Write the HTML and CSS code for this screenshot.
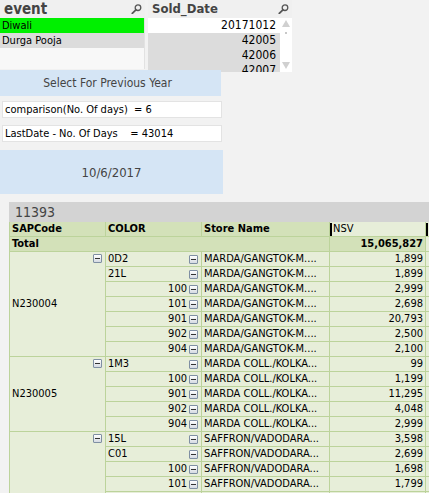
FILE: index.html
```html
<!DOCTYPE html>
<html>
<head>
<meta charset="utf-8">
<link rel="stylesheet" href="styles.css">
</head>
<body>
<div class="top">
  <div class="lb lb-event">
    <div class="lb-head"><span class="lb-title">event</span>
      <svg class="search" width="11" height="10" viewBox="0 0 11 10"><circle cx="7" cy="3.7" r="2.8" fill="none" stroke="#555" stroke-width="1.3"/><line x1="4.9" y1="5.9" x2="1.3" y2="9.3" stroke="#555" stroke-width="1.8" stroke-linecap="round"/></svg>
    </div>
    <div class="lb-body">
      <div class="lb-list">
        <div class="lb-item sel">Diwali</div>
        <div class="lb-item excl">Durga Pooja</div>
      </div>
    </div>
  </div>
  <div class="lb lb-date">
    <div class="lb-head"><span class="lb-title">Sold_Date</span>
      <svg class="search" width="11" height="10" viewBox="0 0 11 10"><circle cx="7" cy="3.7" r="2.8" fill="none" stroke="#555" stroke-width="1.3"/><line x1="4.9" y1="5.9" x2="1.3" y2="9.3" stroke="#555" stroke-width="1.8" stroke-linecap="round"/></svg>
    </div>
    <div class="lb-body">
      <div class="lb-list num">
        <div class="lb-item poss">20171012</div>
        <div class="lb-item excl">42005</div>
        <div class="lb-item excl">42006</div>
        <div class="lb-item excl">42007</div>
      </div>
      <div class="scrollbar">
        <svg width="12" height="54" viewBox="0 0 12 54"><polygon points="6,2 10,9 2,9" fill="#d0d0d0"/><rect x="5" y="14" width="2" height="2" fill="#c8c8c8"/><polygon points="2,44 10,44 6,51" fill="#d0d0d0"/></svg>
      </div>
    </div>
  </div>
</div>

<div class="controls">
  <div class="btn-blue">Select For Previous Year</div>
  <div class="txt">comparison(No. Of days)  = 6</div>
  <div class="txt txt2">LastDate - No. Of Days    = 43014</div>
  <div class="blue-big">10/6/2017</div>
</div>

<div class="pivot">
  <div class="pv-title">11393</div>
  <table class="pv">
    <colgroup><col class="c1"><col class="c2"><col class="c3"><col class="c4"><col class="c5"></colgroup>
    <tr class="hd">
      <td class="first">SAPCode</td>
      <td>COLOR</td>
      <td>Store Name</td>
      <td class="hd-light"><span class="bar"></span>NSV</td>
      <td class="hd-light"><span class="bar"></span></td>
    </tr>
    <tr class="hd">
      <td class="first" colspan="3">Total</td>
      <td class="r">15,065,827</td>
      <td class="lt"></td>
    </tr>

    <tr>
      <td class="first sap" rowspan="7">N230004<span class="mi abs"></span></td>
      <td><div class="cc"><span>0D2</span><span class="mi"></span></div></td>
      <td>MARDA/GANGTOK-M....</td><td class="r">1,899</td><td></td>
    </tr>
    <tr>
      <td><div class="cc"><span>21L</span><span class="mi"></span></div></td>
      <td>MARDA/GANGTOK-M....</td><td class="r">1,899</td><td></td>
    </tr>
    <tr>
      <td><div class="cc n"><span>100</span><span class="mi"></span></div></td>
      <td>MARDA/GANGTOK-M....</td><td class="r">2,999</td><td></td>
    </tr>
    <tr>
      <td><div class="cc n"><span>101</span><span class="mi"></span></div></td>
      <td>MARDA/GANGTOK-M....</td><td class="r">2,698</td><td></td>
    </tr>
    <tr>
      <td><div class="cc n"><span>901</span><span class="mi"></span></div></td>
      <td>MARDA/GANGTOK-M....</td><td class="r">20,793</td><td></td>
    </tr>
    <tr>
      <td><div class="cc n"><span>902</span><span class="mi"></span></div></td>
      <td>MARDA/GANGTOK-M....</td><td class="r">2,500</td><td></td>
    </tr>
    <tr>
      <td><div class="cc n"><span>904</span><span class="mi"></span></div></td>
      <td>MARDA/GANGTOK-M....</td><td class="r">2,100</td><td></td>
    </tr>

    <tr>
      <td class="first sap" rowspan="5">N230005<span class="mi abs"></span></td>
      <td><div class="cc"><span>1M3</span><span class="mi"></span></div></td>
      <td>MARDA COLL./KOLKA...</td><td class="r">99</td><td></td>
    </tr>
    <tr>
      <td><div class="cc n"><span>100</span><span class="mi"></span></div></td>
      <td>MARDA COLL./KOLKA...</td><td class="r">1,199</td><td></td>
    </tr>
    <tr>
      <td><div class="cc n"><span>901</span><span class="mi"></span></div></td>
      <td>MARDA COLL./KOLKA...</td><td class="r">11,295</td><td></td>
    </tr>
    <tr>
      <td><div class="cc n"><span>902</span><span class="mi"></span></div></td>
      <td>MARDA COLL./KOLKA...</td><td class="r">4,048</td><td></td>
    </tr>
    <tr>
      <td><div class="cc n"><span>904</span><span class="mi"></span></div></td>
      <td>MARDA COLL./KOLKA...</td><td class="r">2,999</td><td></td>
    </tr>

    <tr>
      <td class="first sap" rowspan="5"><span class="mi abs"></span></td>
      <td><div class="cc"><span>15L</span><span class="mi"></span></div></td>
      <td>SAFFRON/VADODARA...</td><td class="r">3,598</td><td></td>
    </tr>
    <tr>
      <td><div class="cc"><span>C01</span><span class="mi"></span></div></td>
      <td>SAFFRON/VADODARA...</td><td class="r">2,699</td><td></td>
    </tr>
    <tr>
      <td><div class="cc n"><span>100</span><span class="mi"></span></div></td>
      <td>SAFFRON/VADODARA...</td><td class="r">1,698</td><td></td>
    </tr>
    <tr>
      <td><div class="cc n"><span>101</span><span class="mi"></span></div></td>
      <td>SAFFRON/VADODARA...</td><td class="r">1,799</td><td></td>
    </tr>
    <tr>
      <td></td><td></td><td></td><td></td>
    </tr>
  </table>
</div>
</body>
</html>
```

FILE: styles.css
```css
* { box-sizing: border-box; }
html, body { margin: 0; padding: 0; overflow: hidden; }
body {
  width: 429px;
  height: 493px;
  background: #f2f2f2;
  font-family: "DejaVu Sans Condensed", "DejaVu Sans", sans-serif;
  font-size: 11px;
  color: #000;
}

/* list boxes */
.top { display: flex; gap: 3px; height: 70px; }
.lb { display: flex; flex-direction: column; }
.lb-event { width: 145px; height: 69px; }
.lb-date { width: 144px; height: 72px; }
.lb-head {
  height: 18px;
  flex: none;
  display: flex;
  align-items: center;
  justify-content: space-between;
  padding: 0 3px 0 4px;
  background: #f0f0f0;
}
.lb-title { color: #444; font-weight: bold; font-size: 15px; line-height: 18px; }
.lb-date .lb-title { font-size: 13px; }
.lb-body { flex: 1; display: flex; background: #f8f8f8; overflow: hidden; }
.lb-event .lb-body { border-right: 1px solid #e2e2e2; }
.lb-list { flex: 1; }
.lb-item { height: 15px; line-height: 15px; padding: 0 2px; white-space: nowrap; font-size: 11px; }
.sel { background: #00f000; }
.excl { background: #dcdcdc; }
.poss { background: #fff; }
.num .lb-item { text-align: right; padding-right: 4px; font-size: 12px; }
.scrollbar { width: 12px; background: #fff; flex: none; }
.scrollbar svg { display: block; }

/* controls */
.controls { display: flex; flex-direction: column; align-items: flex-start; }
.btn-blue {
  width: 221px;
  height: 26px;
  background: #d5e5f5;
  color: #444;
  font-size: 12px;
  display: flex;
  align-items: center;
  justify-content: center;
  padding-right: 6px;
}
.txt {
  margin: 5px 0 0 2px;
  width: 220px;
  height: 17px;
  background: #fff;
  border: 1px solid #e3e3e3;
  padding-left: 2px;
  line-height: 15px;
  white-space: pre;
  font-size: 11px;
}
.txt2 { margin-top: 7px; }
.blue-big {
  margin-top: 8px;
  width: 223px;
  height: 44px;
  background: #d5e5f5;
  color: #444;
  font-size: 13px;
  display: flex;
  align-items: center;
  justify-content: center;
}

/* pivot table */
.pivot { margin: 8px 0 0 9px; width: 420px; overflow: hidden; }
.pv-title {
  height: 20px;
  background: #d3d3d3;
  color: #444;
  font-size: 14px;
  line-height: 20px;
  padding-left: 6px;
}
.pv { border-collapse: separate; border-spacing: 0; table-layout: fixed; width: 497px; }
.c1 { width: 97px; }
.c2 { width: 96px; }
.c3 { width: 128px; }
.c4 { width: 96px; }
.c5 { width: 80px; }
.pv td {
  height: 15px;
  padding: 0 2px;
  line-height: 14px;
  background: #e7eed9;
  border-right: 1px solid #bcd39b;
  border-bottom: 1px solid #bcd39b;
  white-space: nowrap;
  overflow: hidden;
  vertical-align: middle;
}
.pv td.first { border-left: 1px solid #bcd39b; }
.pv .hd td { background: #d3e1b9; font-weight: bold; }
.pv .hd td.hd-light, .pv .hd td.lt { background: #e7eed9; font-weight: normal; padding-left: 0; }
.pv td.r { text-align: right; }
.bar { display: inline-block; width: 2px; height: 13px; background: #000; vertical-align: middle; margin-right: 1px; }
.sap { position: relative; }
.cc { display: flex; align-items: center; justify-content: space-between; gap: 2px; padding-right: 1px; }
.cc.n { justify-content: flex-end; }

.mi {
  display: inline-block;
  width: 9px;
  height: 9px;
  flex: none;
  border: 1px solid #7f8fa3;
  border-radius: 1px;
  background: linear-gradient(#ffffff, #d5dae2);
  position: relative;
}
.mi::after {
  content: "";
  position: absolute;
  left: 1px;
  right: 1px;
  top: 3px;
  height: 1px;
  background: #333;
}
.mi.abs { position: absolute; top: 2px; right: 3px; }
```
